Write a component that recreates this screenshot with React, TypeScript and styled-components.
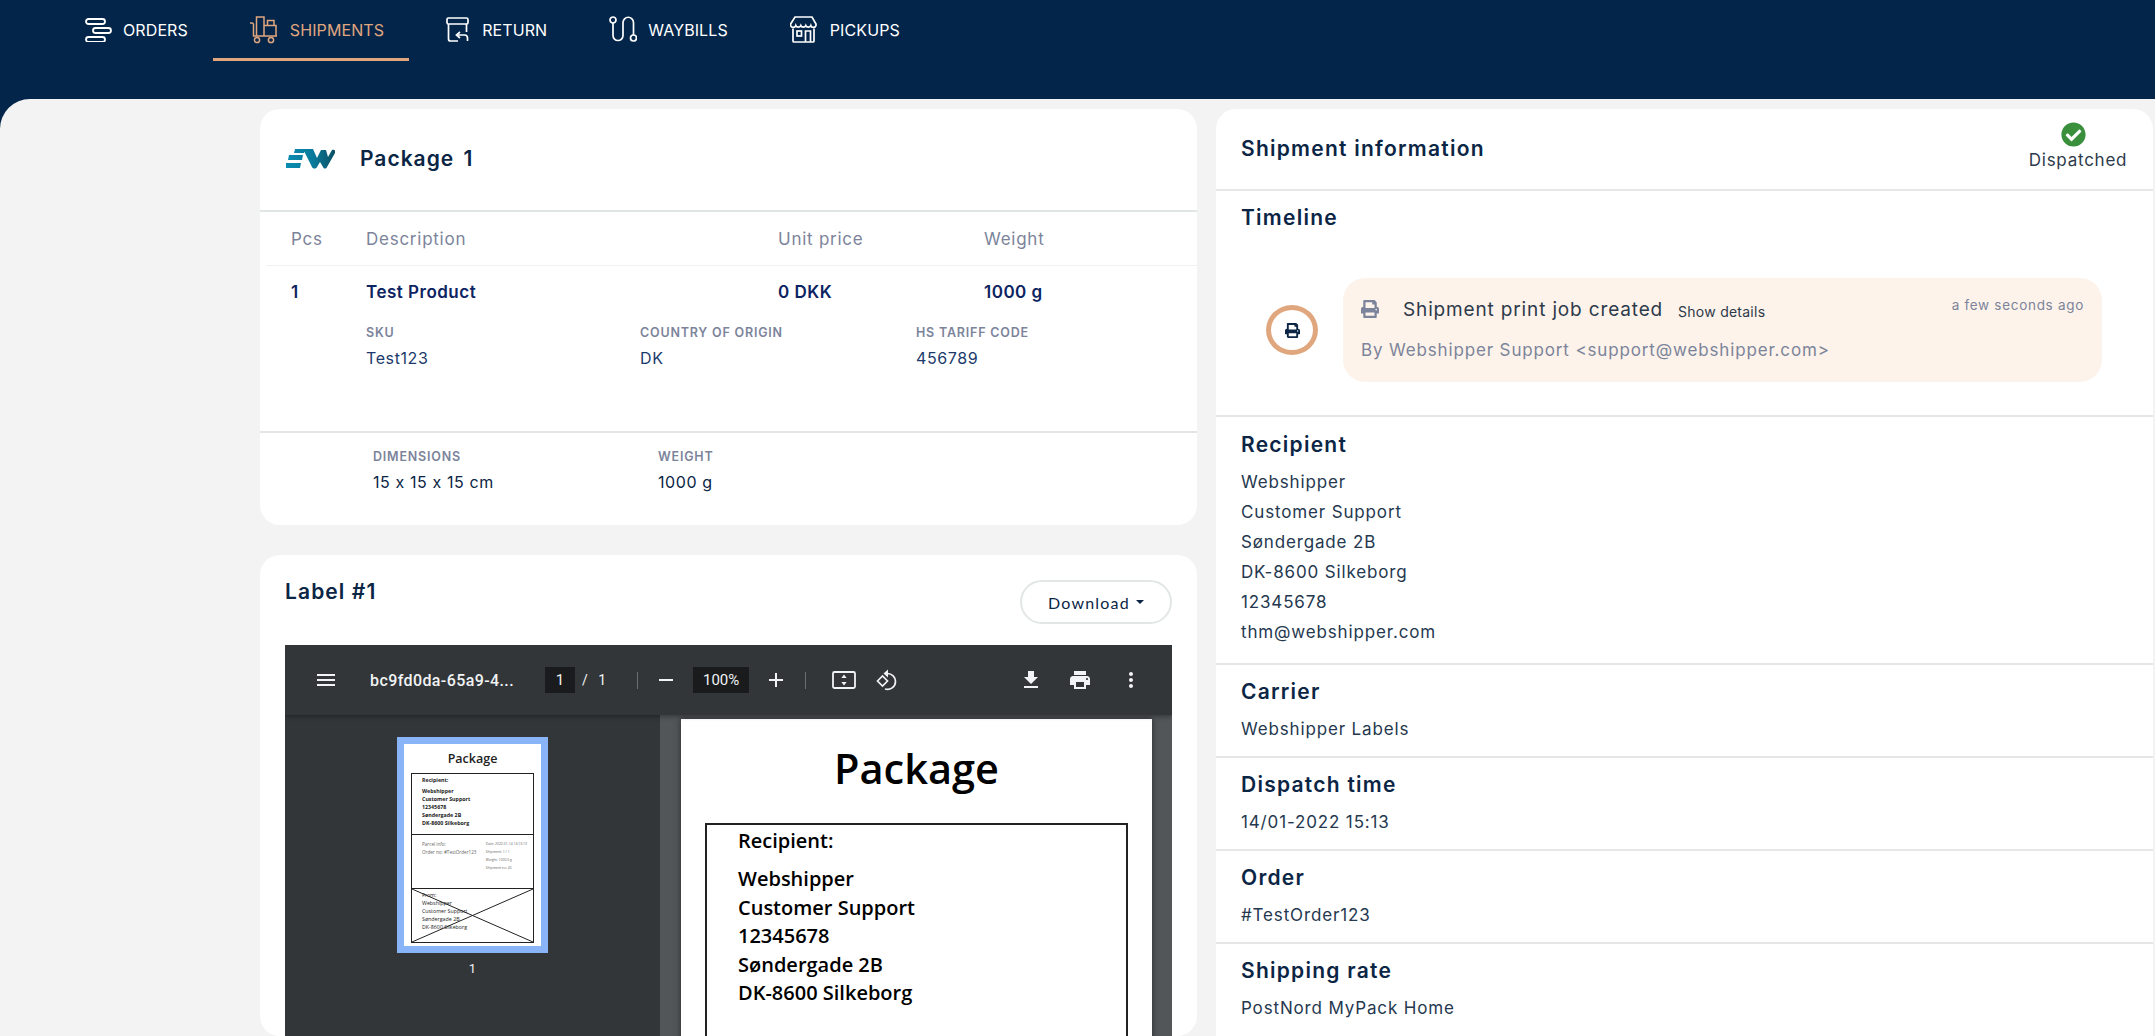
import React from 'react';
import styled, { createGlobalStyle } from 'styled-components';
import { FaPrint, FaCheckCircle } from 'react-icons/fa';

const GlobalStyle = createGlobalStyle`
  html, body {
    margin: 0;
    padding: 0;
    height: 100%;
    overflow: hidden;
    background: #03254a;
    font-family: Inter, "Noto Sans", sans-serif;
  }
  * { box-sizing: border-box; }
`;

const NAVY = '#03254a';
const INK = '#0b2545';
const GREY = '#7c849b';
const PEACH = '#e0a77f';

const Page = styled.div`
  width: 2155px;
  height: 1036px;
  overflow: hidden;
  background: ${NAVY};
  display: flex;
  flex-direction: column;
`;

//Header ----------------------------------------
const Nav = styled.nav`
  height: 99px;
  flex: none;
  display: flex;
  align-items: flex-start;
  padding-left: 48px;
`;

const NavItem = styled.a<{ $active?: boolean; $gap: number }>`
  height: 61px;
  display: flex;
  align-items: center;
  gap: ${(p) => p.$gap}px;
  padding: 1px 25px 0 37px;
  font-size: 16px;
  font-weight: 400;
  letter-spacing: 0.1px;
  color: ${(p) => (p.$active ? PEACH : '#fff')};
  border-bottom: 3px solid ${(p) => (p.$active ? PEACH : 'transparent')};
  > svg {
    flex: none;
  }
`;
//-----------------------------------------------

const Main = styled.main`
  flex: 1;
  min-height: 0;
  background: #f3f3f3;
  border-top-left-radius: 30px;
  padding: 10px 2px 0 260px;
  display: flex;
  gap: 19px;
  align-items: flex-start;
`;

const LeftColumn = styled.div`
  width: 937px;
  display: flex;
  flex-direction: column;
  gap: 30px;
`;

const Card = styled.section`
  background: #fff;
  border-radius: 20px;
`;

//Package card ----------------------------------
const PackageHeader = styled.div`
  height: 103px;
  display: flex;
  align-items: center;
  gap: 25px;
  padding: 0 0 2px 26px;
  border-bottom: 2px solid #e0e5e5;
`;

const PackageTitle = styled.h2`
  margin: 0;
  font-size: 21px;
  font-weight: 600;
  letter-spacing: 1px;
  word-spacing: 3px;
  color: ${INK};
`;

const Row = styled.div`
  display: grid;
  grid-template-columns: 75px 412px 206px 1fr;
  padding-left: 25px;
`;

const TableHead = styled(Row)`
  height: 54px;
  margin-left: 6px;
  padding-left: 25px;
  align-items: center;
  color: ${GREY};
  font-size: 17px;
  letter-spacing: 0.75px;
  border-bottom: 1px solid #f1f1f1;
`;

const ProductRow = styled(Row)`
  padding: 14px 0 0 31px;
  line-height: 24px;
  font-size: 17px;
  font-weight: 600;
  letter-spacing: 0.5px;
  color: #0c2461;
`;

const Details = styled.div<{ $cols: string; $left: number; $top: number; $bottom: number }>`
  display: grid;
  grid-template-columns: ${(p) => p.$cols};
  padding: ${(p) => p.$top}px 0 ${(p) => p.$bottom}px ${(p) => p.$left}px;
`;

const DetailLabel = styled.div`
  font-size: 12.5px;
  line-height: 18px;
  font-weight: 600;
  letter-spacing: 0.8px;
  color: ${GREY};
`;

const DetailValue = styled.div<{ $dark?: boolean }>`
  margin-top: 3px;
  font-size: 16px;
  line-height: 26px;
  letter-spacing: 0.6px;
  color: ${(p) => (p.$dark ? INK : '#1b3a6b')};
`;

const Rule = styled.div`
  height: 2px;
  background: #e3e6e6;
`;
//-----------------------------------------------

//Label card ------------------------------------
const LabelHeader = styled.div`
  height: 90px;
  display: flex;
  justify-content: space-between;
  align-items: flex-start;
  padding: 23px 25px 0;
`;

const LabelTitle = styled.h2`
  margin: 0;
  font-size: 21px;
  line-height: 28px;
  font-weight: 600;
  letter-spacing: 1.1px;
  color: ${INK};
`;

const DownloadButton = styled.button`
  width: 152px;
  height: 44px;
  margin-top: 2px;
  display: flex;
  align-items: center;
  justify-content: center;
  gap: 6px;
  font-family: Lato, sans-serif;
  font-size: 16px;
  letter-spacing: 1.2px;
  color: ${INK};
  background: #fff;
  border: 2px solid #e2e6e6;
  border-radius: 22px;
`;

const Caret = styled.span`
  width: 0;
  height: 0;
  border-left: 4.5px solid transparent;
  border-right: 4.5px solid transparent;
  border-top: 4.5px solid ${INK};
`;

const Viewer = styled.div`
  margin: 0 25px;
  height: 391px;
  overflow: hidden;
  background: #323639;
  color: #f1f3f4;
  font-family: Roboto, sans-serif;
`;

const ViewerBar = styled.div`
  position: relative;
  z-index: 1;
  height: 70px;
  display: flex;
  align-items: center;
  padding: 0 29px 0 29px;
  background: #323639;
  box-shadow: 0 2px 4px rgba(0, 0, 0, 0.3);
  > svg {
    flex: none;
  }
`;

const FileName = styled.span`
  width: 175px;
  margin-left: 32px;
  font-size: 16px;
  font-weight: 500;
  letter-spacing: 0.4px;
  white-space: nowrap;
`;

const NumberBox = styled.span<{ $w: number; $left?: number }>`
  width: ${(p) => p.$w}px;
  height: 26px;
  margin-left: ${(p) => p.$left || 0}px;
  display: flex;
  align-items: center;
  justify-content: center;
  font-size: 15px;
  background: #191b1c;
`;

const BarText = styled.span`
  margin-left: 7px;
  font-size: 14px;
  word-spacing: 7px;
`;

const BarSep = styled.span<{ $left: number; $right: number }>`
  width: 1px;
  height: 17px;
  margin: 0 ${(p) => p.$right}px 0 ${(p) => p.$left}px;
  background: #6c6f72;
`;

const BarSpacer = styled.span`
  flex: 1;
`;

const ViewerBody = styled.div`
  display: flex;
  height: 321px;
`;

const Sidebar = styled.div`
  width: 375px;
  flex: none;
  padding: 22px 0 0 112px;
`;

const Thumb = styled.div`
  width: 151px;
  height: 216px;
  padding: 1px 7px 2px;
  background: #fff;
  border: 7.5px solid #8ab4f8;
  display: flex;
  flex-direction: column;
  font-family: "Open Sans", sans-serif;
  color: #222;
`;

const ThumbTitle = styled.div`
  height: 29px;
  flex: none;
  padding-top: 5px;
  text-align: center;
  font-size: 12.5px;
  font-weight: 600;
  line-height: 18px;
`;

const ThumbBox = styled.div<{ $h: number }>`
  position: relative;
  height: ${(p) => p.$h}px;
  flex: none;
  margin-top: -1px;
  padding: 2px 0 0 10px;
  border: 1px solid #222;
  overflow: hidden;
  font-size: 5.3px;
  line-height: 8px;
`;

const ThumbStrong = styled.div<{ $gap?: number }>`
  margin-bottom: ${(p) => p.$gap || 0}px;
  font-weight: 700;
`;

const ThumbColumns = styled.div`
  display: flex;
  justify-content: space-between;
  padding: 3px 6px 0 0;
  color: #666;
  font-size: 4.6px;
`;

const ThumbTiny = styled.div`
  font-size: 3.4px;
  line-height: 8px;
`;

const ThumbCross = styled.svg`
  position: absolute;
  inset: 0;
  width: 100%;
  height: 100%;
`;

const ThumbNumber = styled.div`
  width: 151px;
  margin-top: 8px;
  text-align: center;
  font-size: 13px;
`;

const PdfArea = styled.div`
  flex: 1;
  display: flex;
  background: #525659;
  padding: 4px 20px 0 21px;
`;

const PdfSheet = styled.div`
  flex: 1;
  height: 400px;
  padding: 0 24px;
  background: #fff;
  color: #000;
  font-family: "Open Sans", sans-serif;
  box-shadow: 0 0 6px rgba(0, 0, 0, 0.5);
`;

const PdfTitle = styled.div`
  height: 104px;
  padding-top: 20px;
  text-align: center;
  font-size: 41.5px;
  font-weight: 600;
  line-height: 58px;
`;

const PdfBox = styled.div`
  height: 300px;
  padding: 2px 0 0 31px;
  border: 2px solid #222;
  font-size: 20px;
  font-weight: 600;
  line-height: 28.4px;
`;

const PdfLabel = styled.div`
  margin-bottom: 10px;
`;
//-----------------------------------------------

//Shipment information --------------------------
const InfoCard = styled(Card)`
  width: 937px;
  height: 940px;
  border-bottom-left-radius: 0;
  border-bottom-right-radius: 0;
`;

const InfoHeader = styled.div`
  height: 82px;
  display: flex;
  justify-content: space-between;
  align-items: center;
  padding: 0 24px 0 25px;
  border-bottom: 2px solid #e5e6e6;
`;

const SectionTitle = styled.h3`
  margin: 0;
  font-size: 21px;
  line-height: 28px;
  font-weight: 600;
  letter-spacing: 1.25px;
  color: ${INK};
`;

const Status = styled.div`
  width: 112px;
  display: flex;
  flex-direction: column;
  align-items: center;
  padding-bottom: 3px;
  color: #2d3a4a;
  font-size: 17px;
  line-height: 26px;
  letter-spacing: 0.75px;
  > svg {
    color: #3a8f3d;
  }
`;

const StatusText = styled.span`
  margin-left: 10px;
`;

const Section = styled.div<{ $top?: number; $bottom?: number; $last?: boolean }>`
  padding: ${(p) => p.$top ?? 13}px 30px ${(p) => p.$bottom ?? 12}px 25px;
  border-bottom: ${(p) => (p.$last ? 'none' : '2px solid #e5e6e6')};
`;

const SectionBody = styled.div`
  margin-top: 8px;
  font-size: 17px;
  line-height: 30px;
  letter-spacing: 0.85px;
  color: #25384f;
`;

const EntryRow = styled.div`
  margin: 46px 0 0 25px;
  display: flex;
  align-items: center;
  gap: 25px;
`;

const EntryDot = styled.div`
  width: 52px;
  height: 50px;
  flex: none;
  display: flex;
  align-items: center;
  justify-content: center;
  border: 5px solid ${PEACH};
  border-radius: 50%;
  color: ${INK};
`;

const EntryCard = styled.div`
  width: 759px;
  height: 104px;
  padding: 18px 18px 0;
  background: #fdf3ea;
  border-radius: 22px;
`;

const EntryTop = styled.div`
  display: flex;
  align-items: center;
  height: 26px;
  color: ${GREY};
`;

const EntryTitle = styled.span`
  margin-left: 24px;
  font-size: 19px;
  letter-spacing: 0.85px;
  color: #2d3a4a;
`;

const ShowDetails = styled.span`
  margin: 5px 0 0 15px;
  font-size: 14px;
  letter-spacing: 0.25px;
  color: #2d3a4a;
`;

const EntryTime = styled.span`
  margin: -8px 0 0 auto;
  font-size: 13.5px;
  letter-spacing: 0.7px;
  color: ${GREY};
`;

const EntryBy = styled.div`
  margin-top: 15px;
  font-size: 17px;
  line-height: 26px;
  letter-spacing: 0.85px;
  color: ${GREY};
`;
//-----------------------------------------------

const OrdersIcon = () => (
  <svg width="27" height="24" viewBox="0 0 27 24" fill="none" stroke="currentColor" strokeWidth="1.8">
    <rect x="1" y="1" width="19" height="5" rx="2.5" />
    <rect x="8" y="10" width="18" height="5" rx="2.5" />
    <rect x="1" y="19" width="19" height="5" rx="2.5" />
  </svg>
);

const ShipmentsIcon = () => (
  <svg width="27" height="28" viewBox="0 0 27 28" fill="none" stroke="currentColor" strokeWidth="1.5">
    <path d="M0 7h2a1.5 1.5 0 0 1 1.5 1.5V20H27" />
    <path d="M6.5 20V1H14v19" />
    <path d="M14 9.5h12V20" />
    <path d="M17.5 9.5V4.5H24v5" />
    <circle cx="7" cy="24" r="2.6" />
    <circle cx="21" cy="24" r="2.6" />
  </svg>
);

const ReturnIcon = () => (
  <svg width="23" height="25" viewBox="0 0 23 25" fill="none" stroke="currentColor" strokeWidth="1.7">
    <rect x="1" y="1" width="21" height="6" rx="1.5" />
    <path d="M2.5 7v15a2 2 0 0 0 2 2H12" />
    <path d="M20.5 7v8" />
    <path d="M14 15l-3.5 3 3.5 3" />
    <path d="M11 18h7.5a3 3 0 0 1 3 3v3" />
  </svg>
);

const WaybillsIcon = () => (
  <svg width="28" height="27" viewBox="0 0 28 27" fill="none" stroke="currentColor" strokeWidth="1.7">
    <circle cx="4" cy="4" r="3" />
    <circle cx="24.5" cy="22" r="3" />
    <path d="M4 7v12.5a5 5 0 0 0 10 0V6.5a5 5 0 0 1 10.5 0V19" />
  </svg>
);

const PickupsIcon = () => (
  <svg width="27" height="27" viewBox="0 0 27 27" fill="none" stroke="currentColor" strokeWidth="1.7">
    <path d="M5 1h17l4 7v1.5a2.7 2.7 0 0 1-5.2 0 2.7 2.7 0 0 1-5 0 2.7 2.7 0 0 1-5 0 2.7 2.7 0 0 1-5 0 2.7 2.7 0 0 1-5.2 0V8z" />
    <path d="M3 12.5V25a1 1 0 0 0 1 1h19a1 1 0 0 0 1-1V12.5" />
    <rect x="7" y="15" width="4.5" height="5" />
    <path d="M15.5 26V15h5v11" />
  </svg>
);

const Logo = () => (
  <svg width="49" height="20" viewBox="0 0 49 20">
    <defs>
      <linearGradient id="logoFill" x1="0" x2="1" y1="0" y2="0">
        <stop offset="0" stopColor="#0a8cb0" />
        <stop offset="0.55" stopColor="#0a7a9a" />
        <stop offset="1" stopColor="#0b4f63" />
      </linearGradient>
    </defs>
    <path
      fill="url(#logoFill)"
      d="M9 0h10l-1 4H8zM3 6h14l-1 5H2zM0 14h15l-1 5H0zM17 0h10l4 9 4-8h5l2 7 4-7c2-1 4 0 3 3l-8 14c-1 2-3 2-4 0l-3-5-3 5c-1 2-4 2-5 0z"
    />
  </svg>
);

const MATERIAL = {
  menu: 'M3 18h18v-2H3v2zm0-5h18v-2H3v2zm0-7v2h18V6H3z',
  download: 'M19 9h-4V3H9v6H5l7 7 7-7zM5 18v2h14v-2H5z',
  print: 'M19 8H5c-1.66 0-3 1.34-3 3v6h4v4h12v-4h4v-6c0-1.66-1.34-3-3-3zm-3 11H8v-5h8v5zm3-7c-.55 0-1-.45-1-1s.45-1 1-1 1 .45 1 1-.45 1-1 1zm-1-9H6v4h12V3z',
  more: 'M12 8c1.1 0 2-.9 2-2s-.9-2-2-2-2 .9-2 2 .9 2 2 2zm0 2c-1.1 0-2 .9-2 2s.9 2 2 2 2-.9 2-2-.9-2-2-2zm0 6c-1.1 0-2 .9-2 2s.9 2 2 2 2-.9 2-2-.9-2-2-2z',
  minus: 'M19 13H5v-2h14v2z',
  plus: 'M19 13h-6v6h-2v-6H5v-2h6V5h2v6h6v2z',
};

const BarIconSvg = styled.svg<{ $left?: number }>`
  margin-left: ${(p) => p.$left || 0}px;
`;

const BarIcon = ({ d, left }: { d: string; left?: number }) => (
  <BarIconSvg width="24" height="24" viewBox="0 0 24 24" fill="currentColor" $left={left}>
    <path d={d} />
  </BarIconSvg>
);

const FitIcon = () => (
  <BarIconSvg width="24" height="20" viewBox="0 0 24 20" fill="none" stroke="currentColor" strokeWidth="1.8" $left={26}>
    <rect x="1" y="2" width="22" height="16" rx="1.5" />
    <path d="M12 4.5l2.6 3.5H9.4zM12 15.5l2.6-3.5H9.4z" fill="currentColor" stroke="none" />
  </BarIconSvg>
);

const RotateIcon = () => (
  <BarIconSvg width="24" height="24" viewBox="0 0 24 24" fill="none" stroke="currentColor" strokeWidth="1.7" $left={19}>
    <path d="M2.5 13l5-5 5 5-5 5z" />
    <path d="M11 5.5h1.5a8 8 0 0 1 8 8A8 8 0 0 1 10 21" />
    <path d="M13 1.5L8.5 5.5l4.5 4" fill="currentColor" stroke="none" />
  </BarIconSvg>
);

const NAV = [
  { label: 'ORDERS', Icon: OrdersIcon, gap: 11 },
  { label: 'SHIPMENTS', Icon: ShipmentsIcon, gap: 13, active: true },
  { label: 'RETURN', Icon: ReturnIcon, gap: 13 },
  { label: 'WAYBILLS', Icon: WaybillsIcon, gap: 11 },
  { label: 'PICKUPS', Icon: PickupsIcon, gap: 13 },
];

const RECIPIENT = [
  'Webshipper',
  'Customer Support',
  'Søndergade 2B',
  'DK-8600 Silkeborg',
  '12345678',
  'thm@webshipper.com',
];

const PDF_LINES = ['Webshipper', 'Customer Support', '12345678', 'Søndergade 2B', 'DK-8600 Silkeborg'];

const SECTIONS = [
  { title: 'Carrier', value: 'Webshipper Labels' },
  { title: 'Dispatch time', value: '14/01-2022 15:13' },
  { title: 'Order', value: '#TestOrder123' },
  { title: 'Shipping rate', value: 'PostNord MyPack Home' },
];

const App = (): JSX.Element => {
  return (
    <Page>
      <GlobalStyle />
      <Nav>
        {NAV.map(({ label, Icon, gap, active }) => (
          <NavItem key={label} $active={active} $gap={gap}>
            <Icon />
            {label}
          </NavItem>
        ))}
      </Nav>

      <Main>
        <LeftColumn>
          <Card>
            <PackageHeader>
              <Logo />
              <PackageTitle>Package 1</PackageTitle>
            </PackageHeader>
            <TableHead>
              <span>Pcs</span>
              <span>Description</span>
              <span>Unit price</span>
              <span>Weight</span>
            </TableHead>
            <ProductRow>
              <span>1</span>
              <span>Test Product</span>
              <span>0 DKK</span>
              <span>1000 g</span>
            </ProductRow>
            <Details $cols="274px 276px 1fr" $left={106} $top={20} $bottom={60}>
              <div>
                <DetailLabel>SKU</DetailLabel>
                <DetailValue>Test123</DetailValue>
              </div>
              <div>
                <DetailLabel>COUNTRY OF ORIGIN</DetailLabel>
                <DetailValue>DK</DetailValue>
              </div>
              <div>
                <DetailLabel>HS TARIFF CODE</DetailLabel>
                <DetailValue>456789</DetailValue>
              </div>
            </Details>
            <Rule />
            <Details $cols="285px 1fr" $left={113} $top={15} $bottom={30}>
              <div>
                <DetailLabel>DIMENSIONS</DetailLabel>
                <DetailValue $dark>15 x 15 x 15 cm</DetailValue>
              </div>
              <div>
                <DetailLabel>WEIGHT</DetailLabel>
                <DetailValue $dark>1000 g</DetailValue>
              </div>
            </Details>
          </Card>

          <Card>
            <LabelHeader>
              <LabelTitle>Label #1</LabelTitle>
              <DownloadButton>
                Download
                <Caret />
              </DownloadButton>
            </LabelHeader>
            <Viewer>
              <ViewerBar>
                <BarIcon d={MATERIAL.menu} />
                <FileName>bc9fd0da-65a9-4...</FileName>
                <NumberBox $w={30}>1</NumberBox>
                <BarText>/ 1</BarText>
                <BarSep $left={31} $right={16} />
                <BarIcon d={MATERIAL.minus} />
                <NumberBox $w={56} $left={15}>100%</NumberBox>
                <BarIcon d={MATERIAL.plus} left={15} />
                <BarSep $left={17} $right={0} />
                <FitIcon />
                <RotateIcon />
                <BarSpacer />
                <BarIcon d={MATERIAL.download} />
                <BarIcon d={MATERIAL.print} left={25} />
                <BarIcon d={MATERIAL.more} left={27} />
              </ViewerBar>
              <ViewerBody>
                <Sidebar>
                  <Thumb>
                    <ThumbTitle>Package</ThumbTitle>
                    <ThumbBox $h={62}>
                      <ThumbStrong $gap={3}>Recipient:</ThumbStrong>
                      {PDF_LINES.map((line) => (
                        <ThumbStrong key={line}>{line}</ThumbStrong>
                      ))}
                    </ThumbBox>
                    <ThumbBox $h={55}>
                      <ThumbColumns>
                        <div>
                          Parcel info:
                          <br />
                          Order no: #TestOrder123
                        </div>
                        <div>
                          <ThumbTiny>Date: 2022-01-14 14:13:13</ThumbTiny>
                          <ThumbTiny>Shipment: 1 / 1</ThumbTiny>
                          <ThumbTiny>Weight: 1000.0 g</ThumbTiny>
                          <ThumbTiny>Shipment no: 45</ThumbTiny>
                        </div>
                      </ThumbColumns>
                    </ThumbBox>
                    <ThumbBox $h={55}>
                      <div>From:</div>
                      <div>Webshipper</div>
                      <div>Customer Support</div>
                      <div>Søndergade 2B</div>
                      <div>DK-8600 Silkeborg</div>
                      <ThumbCross viewBox="0 0 100 100" preserveAspectRatio="none">
                        <path d="M0 0L100 100M100 0L0 100" stroke="#222" strokeWidth="1" vectorEffect="non-scaling-stroke" />
                      </ThumbCross>
                    </ThumbBox>
                  </Thumb>
                  <ThumbNumber>1</ThumbNumber>
                </Sidebar>
                <PdfArea>
                  <PdfSheet>
                    <PdfTitle>Package</PdfTitle>
                    <PdfBox>
                      <PdfLabel>Recipient:</PdfLabel>
                      {PDF_LINES.map((line) => (
                        <div key={line}>{line}</div>
                      ))}
                    </PdfBox>
                  </PdfSheet>
                </PdfArea>
              </ViewerBody>
            </Viewer>
          </Card>
        </LeftColumn>

        <InfoCard>
          <InfoHeader>
            <SectionTitle>Shipment information</SectionTitle>
            <Status>
              <FaCheckCircle size={25} />
              <StatusText>Dispatched</StatusText>
            </Status>
          </InfoHeader>
          <Section $bottom={33}>
            <SectionTitle>Timeline</SectionTitle>
            <EntryRow>
              <EntryDot>
                <FaPrint size={15} />
              </EntryDot>
              <EntryCard>
                <EntryTop>
                  <FaPrint size={18} />
                  <EntryTitle>Shipment print job created</EntryTitle>
                  <ShowDetails>Show details</ShowDetails>
                  <EntryTime>a few seconds ago</EntryTime>
                </EntryTop>
                <EntryBy>By Webshipper Support &lt;support@webshipper.com&gt;</EntryBy>
              </EntryCard>
            </EntryRow>
          </Section>
          <Section $top={14} $bottom={16}>
            <SectionTitle>Recipient</SectionTitle>
            <SectionBody>
              {RECIPIENT.map((line) => (
                <div key={line}>{line}</div>
              ))}
            </SectionBody>
          </Section>
          {SECTIONS.map(({ title, value }, i) => (
            <Section key={title} $last={i === SECTIONS.length - 1}>
              <SectionTitle>{title}</SectionTitle>
              <SectionBody>{value}</SectionBody>
            </Section>
          ))}
        </InfoCard>
      </Main>
    </Page>
  );
};

export default App;
